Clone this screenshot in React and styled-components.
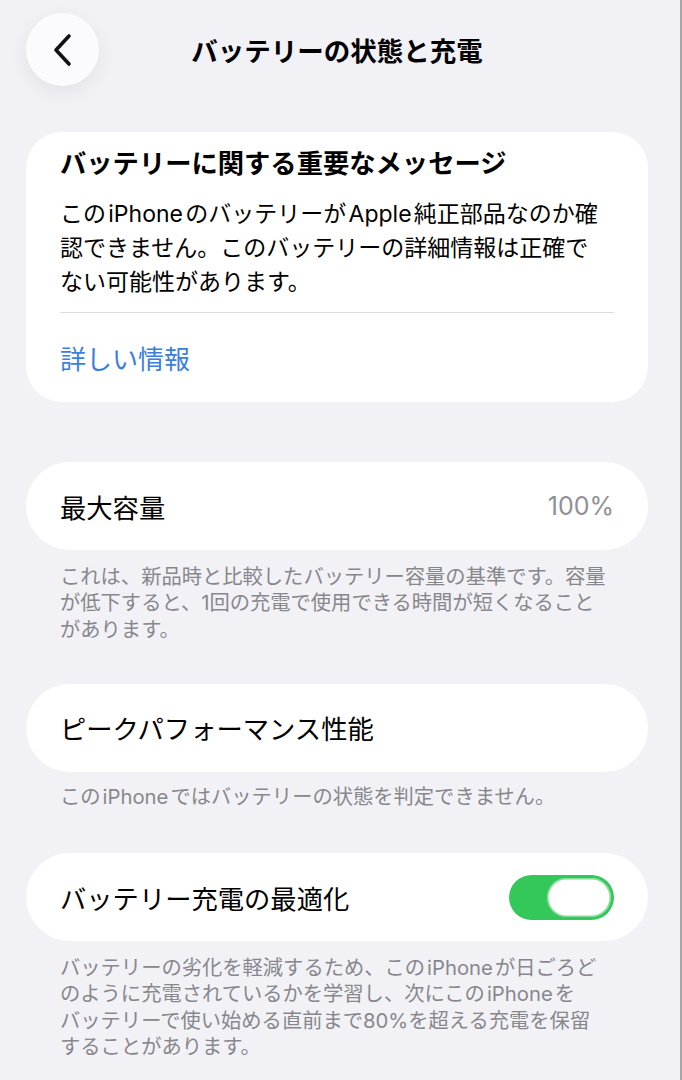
import React from 'react';
import styled, { createGlobalStyle } from 'styled-components';

const GlobalStyle = createGlobalStyle`
  html, body {
    margin: 0;
    padding: 0;
    background: #f2f2f7;
  }
  body {
    font-family: "Inter", "Noto Sans CJK JP", sans-serif;
    color: #000;
    -webkit-font-smoothing: antialiased;
  }
`;

const Page = styled.div`
  box-sizing: border-box;
  width: 682px;
  min-height: 1080px;
  padding: 13px 32px 40px 26px;
  background: #f2f1f6;
  border-right: 2px solid #a5a5aa;
  display: flex;
  flex-direction: column;
`;

const Header = styled.header`
  display: grid;
  grid-template-columns: 73px 1fr 73px;
  align-items: center;
  height: 73px;
  margin-bottom: 46px;
`;

const BackButton = styled.button`
  width: 73px;
  height: 73px;
  border-radius: 50%;
  border: none;
  padding: 0;
  background: #fbfbfd;
  box-shadow: 0 6px 22px rgba(0, 0, 0, 0.07);
  display: flex;
  align-items: center;
  justify-content: center;
  cursor: pointer;
`;

const Title = styled.h1`
  margin: 0;
  text-align: center;
  font-size: 26.5px;
  font-weight: 700;
  letter-spacing: 0;
`;

const Card = styled.section`
  background: #fff;
  border-radius: ${({ $radius }) => $radius || 36}px;
  padding: 0 34px;
`;

const CardTitle = styled.h2`
  margin: 0;
  padding-top: 15px;
  font-size: 26.3px;
  line-height: 34px;
  font-weight: 700;
`;

const CardBody = styled.p`
  margin: 16px 0 0;
  font-size: 23px;
  line-height: 34px;
  font-weight: 400;
`;

const Divider = styled.hr`
  margin: 13px 0 0;
  border: none;
  height: 1px;
  background: #dcdce0;
`;

const LinkRow = styled.a`
  display: flex;
  align-items: center;
  height: 89px;
  font-size: 26px;
  color: #3a7fde;
  text-decoration: none;
  cursor: pointer;
`;

const Row = styled.div`
  display: flex;
  align-items: center;
  justify-content: space-between;
  height: 88px;
`;

const Label = styled.span`
  font-size: 26.3px;
  font-weight: 400;
`;

const Value = styled.span`
  font-size: 25px;
  color: #909095;
`;

const Footnote = styled.p`
  margin: ${({ $top }) => $top || 14}px 34px 0;
  font-size: 20.3px;
  line-height: 26.3px;
  color: #87878c;
`;

const Latin = styled.span`
  margin: 0 0.1em;
`;

const Gap = styled.div`
  height: ${({ $h }) => $h}px;
  flex-shrink: 0;
`;

const Track = styled.button`
  box-sizing: border-box;
  width: 105px;
  height: 45px;
  border-radius: 23px;
  border: none;
  padding: 3px;
  background: #34c759;
  display: flex;
  justify-content: flex-end;
  align-items: center;
  cursor: pointer;
`;

const Knob = styled.span`
  width: 64px;
  height: 39px;
  border-radius: 20px;
  background: #fff;
  box-shadow: inset 0 0 0 1.5px rgba(52, 199, 89, 0.6);
`;

const Chevron = () => (
  <svg width="22" height="34" viewBox="0 0 22 34" fill="none">
    <path
      d="M17 3 L4 17 L17 31"
      stroke="#111"
      strokeWidth="3.6"
      strokeLinecap="round"
      strokeLinejoin="round"
    />
  </svg>
);

const App = () => {
  return (
    <>
      <GlobalStyle />
      <Page>
        <Header>
          <BackButton aria-label="戻る">
            <Chevron />
          </BackButton>
          <Title>バッテリーの状態と充電</Title>
          <span />
        </Header>

        <Card>
          <CardTitle>バッテリーに関する重要なメッセージ</CardTitle>
          <CardBody>
            この<Latin>iPhone</Latin>のバッテリーが<Latin>Apple</Latin>純正部品なのか確
            <br />
            認できません。このバッテリーの詳細情報は正確で
            <br />
            ない可能性があります。
          </CardBody>
          <Divider />
          <LinkRow>詳しい情報</LinkRow>
        </Card>

        <Gap $h={60} />

        <Card $radius={44}>
          <Row>
            <Label>最大容量</Label>
            <Value>100%</Value>
          </Row>
        </Card>
        <Footnote>
          これは、新品時と比較したバッテリー容量の基準です。容量
          <br />
          が低下すると、1回の充電で使用できる時間が短くなること
          <br />
          があります。
        </Footnote>

        <Gap $h={41} />

        <Card $radius={44}>
          <Row>
            <Label>ピークパフォーマンス性能</Label>
          </Row>
        </Card>
        <Footnote $top={12}>
          この<Latin>iPhone</Latin>ではバッテリーの状態を判定できません。
        </Footnote>

        <Gap $h={43} />

        <Card $radius={44}>
          <Row>
            <Label>バッテリー充電の最適化</Label>
            <Track aria-label="バッテリー充電の最適化">
              <Knob />
            </Track>
          </Row>
        </Card>
        <Footnote $top={14}>
          バッテリーの劣化を軽減するため、この<Latin>iPhone</Latin>が日ごろど
          <br />
          のように充電されているかを学習し、次にこの<Latin>iPhone</Latin>を
          <br />
          バッテリーで使い始める直前まで80%を超える充電を保留
          <br />
          することがあります。
        </Footnote>
      </Page>
    </>
  );
};

export default App;
